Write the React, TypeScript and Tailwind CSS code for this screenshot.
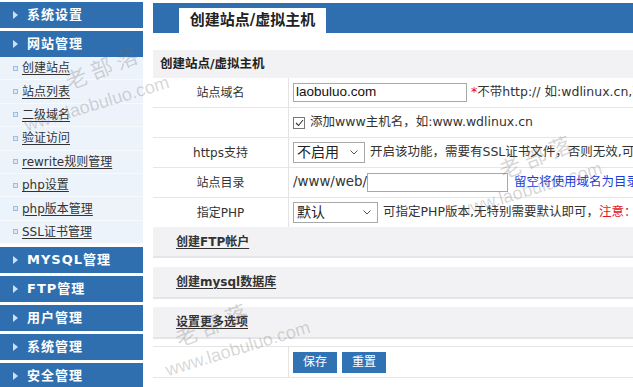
import React from 'react';

const FONT = "font-['DejaVu_Sans','Noto_Sans_CJK_SC',sans-serif]";

const menuTop = ['系统设置', '网站管理'];
const menuBottom = ['MYSQL管理', 'FTP管理', '用户管理', '系统管理', '安全管理'];
const subItems = ['创建站点', '站点列表', '二级域名', '验证访问', 'rewrite规则管理', 'php设置', 'php版本管理', 'SSL证书管理'];

function MenuHeader({ label, className = '' }: { label: string; className?: string }) {
    return (
        <div className={`h-[26px] bg-[#2f6fb0] flex items-center pl-[13px] ${className}`}>
            <span className="w-0 h-0 border-y-[4px] border-y-transparent border-l-[5px] border-l-[#cfe0f3]" />
            <span className="ml-[9px] text-[13px] font-bold text-white tracking-[1px]">{label}</span>
        </div>
    );
}

function Select({ value, width }: { value: string; width: string }) {
    return (
        <div className={`h-[21px] ${width} border border-[#a9a9a9] bg-white flex items-center justify-between pl-[3px] pr-[6px]`}>
            <span className="text-[14px] text-[#222]">{value}</span>
            <svg width="8" height="5" viewBox="0 0 8 5">
                <path d="M0.5 0.5 L4 4 L7.5 0.5" fill="none" stroke="#555" strokeWidth="1" />
            </svg>
        </div>
    );
}

function FormRow({ label, children }: { label: string; children: React.ReactNode }) {
    return (
        <div className="flex h-[30px] border-b border-[#e6e6e6]">
            <div className="w-[136px] shrink-0 border-r border-[#e3e3e3] flex items-center justify-center text-[12px] text-[#333]">
                {label}
            </div>
            <div className="flex-1 flex items-center pl-[4px] text-[12.5px] text-[#333] whitespace-nowrap overflow-hidden">
                {children}
            </div>
        </div>
    );
}

function Section({ title, className = '' }: { title: string; className?: string }) {
    return (
        <div className={`bg-[#f2f2f4] border-b-2 border-[#e4e5e8] flex items-center pl-[23px] ${className}`}>
            <a href="#0" className="text-[12px] font-bold text-[#333] underline underline-offset-2">{title}</a>
        </div>
    );
}

// faint diagonal site watermark, placed by the centre of each line
function Mark({ text, className }: { text: string; className: string }) {
    return (
        <div className={`absolute pointer-events-none select-none whitespace-nowrap -translate-x-1/2 -translate-y-1/2 text-[rgba(110,110,110,0.28)] ${className}`}>
            {text}
        </div>
    );
}

export default function App() {
    return (
        <div className={`relative w-[633px] h-[387px] overflow-hidden bg-white flex ${FONT}`}>
            {/* Sidebar */}
            <aside className="w-[143px] shrink-0 pt-[2px]">
                <MenuHeader label={menuTop[0]} className="mb-[3px]" />
                <MenuHeader label={menuTop[1]} />
                <div className="bg-[#edf3fb]">
                    {subItems.map((item) => (
                        <div key={item} className="h-[23.4px] flex items-center pl-[13px] border-b border-[#f7fafd]">
                            <span className="w-[5px] h-[5px] border border-[#9fbde0] bg-[#dce8f6]" />
                            <a href="#0" className="ml-[4px] text-[12px] text-[#333] underline underline-offset-2">{item}</a>
                        </div>
                    ))}
                </div>
                {menuBottom.map((m) => (
                    <MenuHeader key={m} label={m} className="mt-[3px]" />
                ))}
            </aside>

            {/* Main */}
            <main className="flex-1 ml-[10px] pt-[3px]">
                {/* Tab bar */}
                <div className="h-[30px] bg-[#2f6fb0] flex items-end pl-[26px]">
                    <div className="h-[25px] w-[147px] bg-white flex items-center justify-center text-[15px] font-bold text-[#222]">
                        创建站点/虚拟主机
                    </div>
                </div>

                <div className="mt-[17px] h-[28px] bg-[#f2f2f4] flex items-center pl-[7px] text-[12.5px] font-bold text-[#222]">
                    创建站点/虚拟主机
                </div>

                <FormRow label="站点域名">
                    <div className="h-[19px] w-[174px] shrink-0 border border-[#a9a9a9] flex items-center pl-[2px] text-[13.5px] text-[#111] font-['Liberation_Sans','DejaVu_Sans',sans-serif]">
                        laobuluo.com
                    </div>
                    <span className="ml-[4px] text-[#e00]">*</span>
                    <span>不带http:// 如:wdlinux.cn,不要加www</span>
                </FormRow>
                <FormRow label="">
                    <span className="w-[12px] h-[12px] border border-[#777] flex items-center justify-center bg-white">
                        <svg width="9" height="8" viewBox="0 0 9 8">
                            <path d="M1 4 L3.5 6.5 L8 1" fill="none" stroke="#333" strokeWidth="1.1" />
                        </svg>
                    </span>
                    <span className="ml-[5px]">添加www主机名，如:www.wdlinux.cn</span>
                </FormRow>
                <FormRow label="https支持">
                    <Select value="不启用" width="w-[72px]" />
                    <span className="ml-[5px]">开启该功能，需要有SSL证书文件，否则无效,可以</span>
                </FormRow>
                <FormRow label="站点目录">
                    <span className="text-[13.4px]">/www/web/</span>
                    <div className="h-[19px] w-[141px] shrink-0 border border-[#a9a9a9] bg-white" />
                    <span className="ml-[6px] text-[#1a3fd6]">留空将使用域名为目录</span>
                </FormRow>
                <FormRow label="指定PHP">
                    <Select value="默认" width="w-[85px]" />
                    <span className="ml-[5px]">可指定PHP版本,无特别需要默认即可，</span>
                    <span className="text-[#e3141b]">注意：</span>
                </FormRow>

                <Section title="创建FTP帐户" className="h-[31px] -mt-px" />
                <Section title="创建mysql数据库" className="h-[32px] mt-[9px]" />
                <Section title="设置更多选项" className="h-[32px] mt-[8px]" />

                <div className="mt-[7px] flex h-[32px] border-y border-[#e6e6e6]">
                    <div className="w-[136px] shrink-0 border-r border-[#e3e3e3]" />
                    <div className="flex items-center pl-[4px] gap-[5px]">
                        <button className="h-[21px] w-[44px] bg-[#3073b5] text-white text-[12px]">保存</button>
                        <button className="h-[21px] w-[44px] bg-[#3073b5] text-white text-[12px]">重置</button>
                    </div>
                </div>
            </main>

            <Mark text="老部落" className="left-[104px] top-[68px] text-[22px] tracking-[5px] -rotate-[22deg]" />
            <Mark text="www.laobuluo.com" className="left-[97px] top-[104px] text-[18px] -rotate-[17deg] font-['Liberation_Sans',sans-serif]" />
            <Mark text="老部落" className="left-[214px] top-[325px] text-[22px] tracking-[5px] -rotate-[22deg]" />
            <Mark text="www.laobuluo.com" className="left-[238px] top-[349px] text-[18px] -rotate-[17deg] font-['Liberation_Sans',sans-serif]" />
            <Mark text="老部落" className="left-[538px] top-[157px] text-[22px] tracking-[5px] -rotate-[22deg]" />
            <Mark text="www.laobuluo.com" className="left-[530px] top-[190px] text-[18px] -rotate-[17deg] font-['Liberation_Sans',sans-serif]" />
        </div>
    );
}
